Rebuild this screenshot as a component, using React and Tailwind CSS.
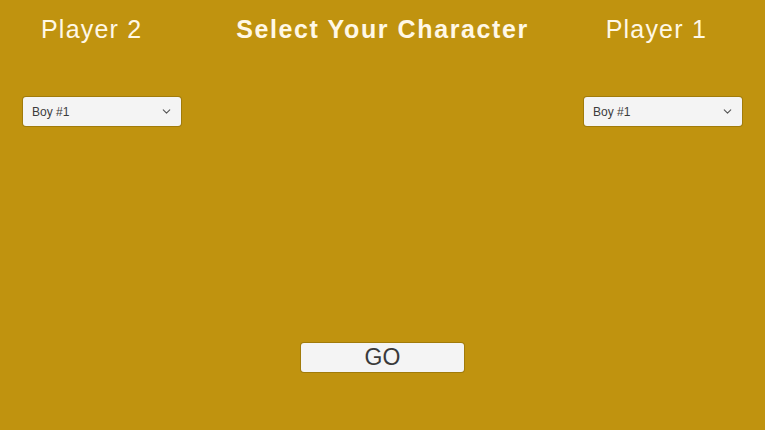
import { ChevronDown } from 'lucide-react';

function CharacterPicker({ value }) {
  return (
    <button
      type="button"
      className="flex h-[29px] w-[158px] items-center justify-between rounded-[3px] bg-[#f4f4f4] pl-[9px] pr-[8px] text-[12px] text-[#3c3c3c] shadow-[0_0_0_1px_rgba(90,70,0,0.3)]"
    >
      <span>{value}</span>
      <ChevronDown size={13} strokeWidth={2} className="text-[#555]" />
    </button>
  );
}

export default function App() {
  return (
    <div className="flex h-[430px] w-[765px] flex-col bg-[#c0930f] font-['Liberation_Sans',Arial,sans-serif] text-[#fff8e6]">
      <div className="flex pt-[17px] leading-none">
        <div className="w-[183px] pl-[41px] text-[25px] tracking-[1.2px]">Player 2</div>
        <div className="flex-1 text-center text-[25px] font-bold tracking-[1.6px]">Select Your Character</div>
        <div className="w-[183px] pr-[58px] text-right text-[25px] tracking-[1.2px]">Player 1</div>
      </div>

      <div className="mt-[55px] flex justify-between px-[23px]">
        <CharacterPicker value="Boy #1" />
        <CharacterPicker value="Boy #1" />
      </div>

      <div className="mt-auto mb-[58px] flex justify-center">
        <button
          type="button"
          className="h-[29px] w-[163px] rounded-[3px] bg-[#f4f4f4] text-[23px] leading-none text-[#3a3a3a] shadow-[0_0_0_1px_rgba(90,70,0,0.3)]"
        >
          GO
        </button>
      </div>
    </div>
  );
}
